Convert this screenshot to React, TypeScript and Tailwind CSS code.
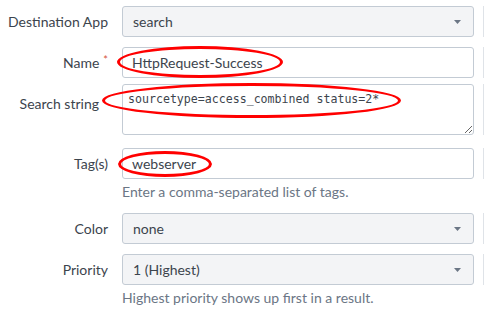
import React from "react";

function Caret() {
  return (
    <svg width="7" height="4" viewBox="0 0 7 4" className="shrink-0">
      <path d="M0 0 L7 0 L3.5 4 Z" fill="#6b7685" />
    </svg>
  );
}

function Row({
  label,
  required,
  children,
  height,
  mt,
  labelClass = "h-[31px]",
}: {
  label: string;
  required?: boolean;
  children: React.ReactNode;
  height: string;
  mt: string;
  labelClass?: string;
}) {
  return (
    <div className={`flex items-start ${mt}`}>
      <div className={`w-[108px] shrink-0 flex justify-end items-center text-[14px] text-[#3c444d] ${labelClass}`}>
        {label}
        {required && <span className="text-[#d6563c] text-[11px] ml-[4px] -mt-[4px]">*</span>}
      </div>
      <div className="ml-[14px] w-[352px] shrink-0">{children}</div>
      <div className={`ml-[9px] w-px bg-[#dfe3e8] ${height}`}></div>
    </div>
  );
}

function SelectBox({ value }: { value: string }) {
  return (
    <div className="h-[31px] flex items-center justify-between pl-[10px] pr-[12px] bg-[#f3f4f6] border border-[#c3cbd4] rounded-[3px] text-[14px] text-[#3c444d]">
      <span>{value}</span>
      <Caret />
    </div>
  );
}

function TextBox({ value }: { value: string }) {
  return (
    <div className="h-[31px] flex items-center pl-[9px] bg-white border border-[#c3cbd4] rounded-[3px] text-[14px] text-[#3c444d]">
      {value}
    </div>
  );
}

function Help({ text }: { text: string }) {
  return <div className="ml-[122px] mt-[4px] text-[14px] text-[#6b7685] leading-[18px]">{text}</div>;
}

export default function App() {
  return (
    <div
      className="relative w-[484px] h-[311px] bg-white overflow-hidden pt-[6px]"
      style={{ fontFamily: "Lato, 'Liberation Sans', sans-serif" }}
    >
      <Row label="Destination App" height="h-[31px]" mt="mt-0">
        <SelectBox value="search" />
      </Row>
      <Row label="Name" required height="h-[31px]" mt="mt-[10px]">
        <TextBox value="HttpRequest-Success" />
      </Row>
      <Row label="Search string" height="h-[51px]" mt="mt-[6px]" labelClass="h-[38px] pr-[9px]">
        <textarea
          readOnly
          defaultValue="sourcetype=access_combined status=2*"
          className="block w-full h-[51px] pt-[6px] px-[5px] bg-white border border-[#c3cbd4] rounded-[3px] text-[11.6px] leading-[16px] text-[#3c444d] outline-none resize-y"
          style={{ fontFamily: "'DejaVu Sans Mono', 'Liberation Mono', monospace" }}
        />
      </Row>
      <Row label="Tag(s)" height="h-[31px]" mt="mt-[13px]">
        <TextBox value="webserver" />
      </Row>
      <Help text="Enter a comma-separated list of tags." />
      <Row label="Color" height="h-[31px]" mt="mt-[12px]">
        <SelectBox value="none" />
      </Row>
      <Row label="Priority" height="h-[31px]" mt="mt-[10px]">
        <SelectBox value="1 (Highest)" />
      </Row>
      <Help text="Highest priority shows up first in a result." />

      {/* red annotation ellipses */}
      <div className="absolute left-[117px] top-[46px] w-[166px] h-[32px] rounded-[50%] border-[3px] border-[#ff0000]"></div>
      <div className="absolute left-[102px] top-[83px] w-[299px] h-[35px] rounded-[50%] border-[3px] border-[#ff0000]"></div>
      <div className="absolute left-[118px] top-[151px] w-[94px] h-[26px] rounded-[50%] border-[3px] border-[#ff0000]"></div>
    </div>
  );
}
